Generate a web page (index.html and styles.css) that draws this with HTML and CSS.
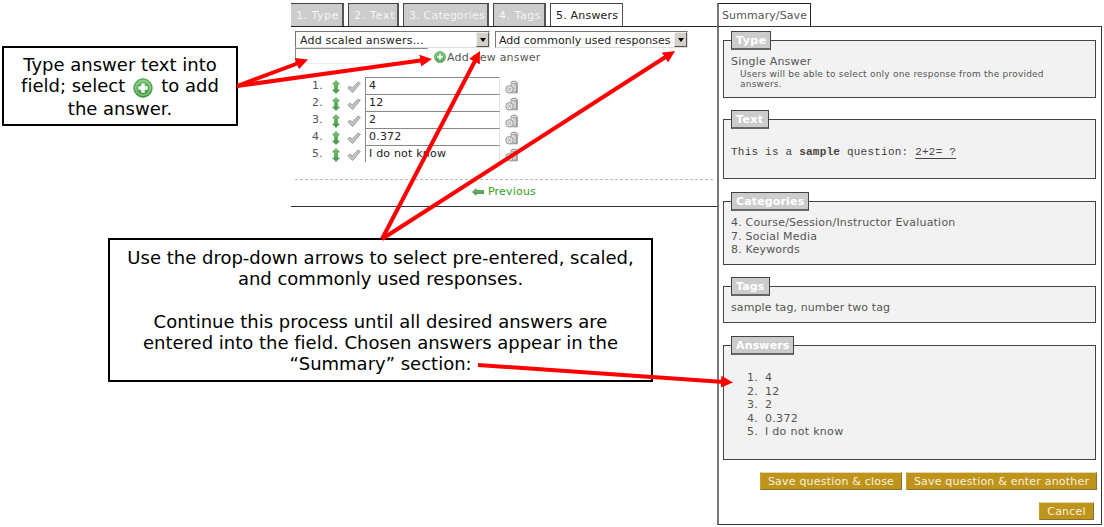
FILE: index.html
```
<!DOCTYPE html>
<html lang="en">
<head>
<meta charset="utf-8">
<title>Question wizard - Answers</title>
<link rel="stylesheet" href="styles.css">
</head>
<body>
<svg class="defs" width="0" height="0">
  <defs>
    <linearGradient id="green" x1="0" y1="0" x2="0" y2="1"><stop offset="0" stop-color="#7cc873"/><stop offset="1" stop-color="#3a9440"/></linearGradient>
    <linearGradient id="grey" x1="0" y1="0" x2="1" y2="0"><stop offset="0" stop-color="#eee"/><stop offset="1" stop-color="#999"/></linearGradient>
    <symbol id="plus" viewBox="0 0 20 20"><circle cx="10" cy="10" r="9.2" fill="url(#green)" stroke="#3f9a41" stroke-width="1"/><circle cx="10" cy="10" r="7.3" fill="none" stroke="#a3d69b" stroke-width="1"/><path d="M8 5h4v3h3v4h-3v3H8v-3H5V8h3z" fill="#fff" stroke="#4da551" stroke-width=".6"/></symbol>
    <symbol id="move" viewBox="0 0 8 14"><path d="M4 .5L7.5 4H5.6v6h1.9L4 13.5.5 10h1.9V4H.5z" fill="url(#green)" stroke="#4f9f52" stroke-width=".7"/></symbol>
    <symbol id="check" viewBox="0 0 14 12"><path d="M.8 6.9l2-2 2.5 2.2L11 1l2.3 1.3-7.3 8.9H5z" fill="#c3c3c3" stroke="#929292" stroke-width=".8"/></symbol>
    <symbol id="trash" viewBox="0 0 14 14"><path d="M6 3.5h6.3v9.3H6z" fill="url(#grey)" stroke="#888" stroke-width=".8"/><path d="M5.5 3.2L7 1.3h4l1.8 1.9" fill="#ddd" stroke="#888" stroke-width=".9"/><path d="M8 5v6M10.2 5v6" stroke="#eee" stroke-width=".8"/><circle cx="4.5" cy="9.3" r="3.8" fill="#ddd" stroke="#909090" stroke-width=".9"/><path d="M3.2 8l2.6 2.6M5.8 8l-2.6 2.6" stroke="#aaa" stroke-width=".9"/></symbol>
    <symbol id="back" viewBox="0 0 12 8"><path d="M.5 4L4 .8v1.8h7.5v2.8H4v1.8z" fill="url(#green)" stroke="#3f8446" stroke-width=".8"/></symbol>
  </defs>
</svg>
<div class="app">
  <main class="wizard">
    <nav class="tabs">
      <a class="tab first">1. Type</a><a class="tab text">2. Text</a><a class="tab categories">3. Categories</a><a class="tab tags">4. Tags</a><a class="tab active">5. Answers</a>
    </nav>
    <section class="editor">
      <div class="selects">
        <div class="select scaled"><span>Add scaled answers...</span><i class="drop"></i></div>
        <div class="select common"><span>Add commonly used responses</span><i class="drop"></i></div>
      </div>
      <div class="add-row"><div class="new-answer"></div><svg class="plus"><use href="#plus"/></svg><span>Add new answer</span></div>
      <div class="answers">
        <div class="answer"><span class="num">1.</span><svg class="move"><use href="#move"/></svg><svg class="check"><use href="#check"/></svg><div class="field">4</div><svg class="trash"><use href="#trash"/></svg></div>
        <div class="answer"><span class="num">2.</span><svg class="move"><use href="#move"/></svg><svg class="check"><use href="#check"/></svg><div class="field">12</div><svg class="trash"><use href="#trash"/></svg></div>
        <div class="answer"><span class="num">3.</span><svg class="move"><use href="#move"/></svg><svg class="check"><use href="#check"/></svg><div class="field">2</div><svg class="trash"><use href="#trash"/></svg></div>
        <div class="answer"><span class="num">4.</span><svg class="move"><use href="#move"/></svg><svg class="check"><use href="#check"/></svg><div class="field">0.372</div><svg class="trash"><use href="#trash"/></svg></div>
        <div class="answer"><span class="num">5.</span><svg class="move"><use href="#move"/></svg><svg class="check"><use href="#check"/></svg><div class="field">I do not know</div><svg class="trash"><use href="#trash"/></svg></div>
      </div>
      <div class="pager"><svg class="back"><use href="#back"/></svg><span>Previous</span></div>
    </section>
  </main>
  <aside class="summary">
    <div class="summary-tab">Summary/Save</div>
    <div class="summary-body">
      <section class="group type"><h3>Type</h3><p>Single Answer</p><p class="hint">Users will be able to select only one response from the provided<br>answers.</p></section>
      <section class="group question"><h3>Text</h3><p>This is a <b>sample</b> question: <u>2+2= ?</u></p></section>
      <section class="group cats"><h3>Categories</h3><p>4. Course/Session/Instructor Evaluation</p><p>7. Social Media</p><p>8. Keywords</p></section>
      <section class="group tagged"><h3>Tags</h3><p>sample tag, number two tag</p></section>
      <section class="group chosen"><h3>Answers</h3>
        <p><span>1.</span>4</p><p><span>2.</span>12</p><p><span>3.</span>2</p><p><span>4.</span>0.372</p><p><span>5.</span>I do not know</p></section>
      <div class="buttons"><div class="button close">Save question &amp; close</div><div class="button another">Save question &amp; enter another</div></div>
      <div class="buttons last"><div class="button cancel">Cancel</div></div>
    </div>
  </aside>
</div>
<div class="callout callout-type">
  <div>Type answer text into</div>
  <div class="with-icon"><span>field; select</span><svg class="plus-big"><use href="#plus"/></svg><span>to add</span></div>
  <div>the answer.</div>
</div>
<div class="callout callout-drop">
  <div>Use the drop-down arrows to select pre-entered, scaled,</div>
  <div>and commonly used responses.</div>
  <div>&nbsp;</div>
  <div>Continue this process until all desired answers are</div>
  <div>entered into the field. Chosen answers appear in the</div>
  <div>“Summary” section:</div>
</div>
<svg class="arrows" width="1104" height="527" viewBox="0 0 1104 527">
  <defs><marker id="tip" viewBox="0 0 12 12" refX="12" refY="6" markerWidth="12" markerHeight="12" markerUnits="userSpaceOnUse" orient="auto"><path d="M0 0L12 6 0 12z" fill="#f00"/></marker></defs>
  <g stroke="#f00" stroke-width="4" fill="none">
    <path d="M237 86L300 62.5"/><path d="M237 86L424 60"/><path d="M382 239L476 59"/><path d="M382 239L667 56"/><path d="M478 365L724 382"/>
  </g>
  <g stroke="none" fill="none">
    <path d="M237 86L308 59.5" marker-end="url(#tip)"/><path d="M237 86L432 59" marker-end="url(#tip)"/><path d="M382 239L480 51" marker-end="url(#tip)"/><path d="M382 239L675 51" marker-end="url(#tip)"/><path d="M478 365L733 382.5" marker-end="url(#tip)"/>
  </g>
</svg>
</body>
</html>
```
FILE: styles.css
```
* { box-sizing: border-box; }
body { margin: 0; width: 1104px; height: 527px; overflow: hidden; background: #fff; color: #555; font: 11px/13.5px "DejaVu Sans", sans-serif; letter-spacing: 0.2px; white-space: nowrap; font-variant-ligatures: none; }
.defs { position: absolute; }
svg { display: block; flex: none; }
p, h3 { margin: 0; }

.app { display: flex; padding: 3px 0 0 291px; }
.wizard { width: 426px; height: 204px; border-bottom: 1px solid #333; }
.tabs { display: flex; gap: 4px; height: 24px; border-bottom: 1px solid #222; }
.tab { height: 23px; padding: 5px 0 0 5px; background: #ccc; border: 1px solid #444; border-right: 2px solid #555; border-bottom: 0; color: #f4f4f4; line-height: 14px; }
.tab.first { width: 53px; border-left: 0; letter-spacing: 0.5px; }
.tab.text { width: 51px; letter-spacing: 0.7px; }
.tab.categories { width: 86px; }
.tab.tags { width: 53px; letter-spacing: 0.5px; }
.tab.active { width: 73px; background: #fff; border-right-width: 1px; color: #222; }

.editor { padding: 4px 4px 0 4px; }
.selects { display: flex; gap: 5px; }
.select { display: flex; justify-content: space-between; height: 17px; border: 1px solid #777; border-right-color: #ddd; border-bottom-color: #ddd; padding-left: 4px; color: #222; line-height: 17px; }
.scaled { width: 195px; }
.common { width: 193px; padding-left: 3px; letter-spacing: 0; }
.drop { width: 13px; height: 15px; background: #d4d0c8; border: 1px solid #eee; border-right-color: #555; border-bottom-color: #555; display: flex; align-items: center; justify-content: center; }
.drop::after { content: ""; border: 3px solid transparent; border-top: 4px solid #000; border-bottom: 0; }
.add-row { display: flex; align-items: flex-start; height: 29px; }
.new-answer { width: 133px; height: 16px; border: 1px solid #888; border-right-color: #eee; border-bottom-color: #eee; }
.plus { width: 12px; height: 12px; margin: 3px 1px 0 6px; }
.add-row span { line-height: 19px; }
.answer { display: flex; align-items: center; height: 17px; }
.num { width: 37px; padding-left: 17px; }
.move { width: 8px; height: 14px; margin-top: 3px; }
.check { width: 14px; height: 12px; margin: 3px 0 0 7px; }
.field { width: 135px; height: 17px; margin-left: 4px; padding-left: 3px; border: 1px solid #888; border-right-color: #e4e4e4; border-bottom: 0; color: #222; line-height: 15px; }
.trash { width: 14px; height: 14px; margin: 2px 0 0 5px; }
.pager { display: flex; justify-content: center; gap: 4px; margin-top: 17px; padding: 4px 0 0; border-top: 1px dashed #bbb; color: #33a01c; line-height: 15px; }
.back { width: 12px; height: 8px; margin-top: 4px; }

.summary { width: 385px; }
.summary-tab { width: 94px; height: 23px; border: 1px solid #222; border-left: 2px solid #777; border-bottom: 0; padding: 5px 0 0 3px; line-height: 14px; letter-spacing: 0.1px; }
.summary-body { height: 499px; border: 1px solid #333; border-left: 2px solid #777; padding: 13px 6px 0 4px; }
.group { width: 373px; margin-bottom: 21px; padding-left: 7px; border: 1px solid #444; background: #f2f2f2; }
.group h3 { width: max-content; height: 19px; margin-top: -10px; padding: 0 4px; border: 1px solid #444; border-bottom: 2px solid #666; background: #ccc; color: #fff; font-size: 11px; line-height: 18px; letter-spacing: 0.15px; }
.type { height: 58px; }
.group.type h3 { width: 40px; letter-spacing: 0.5px; }
.type p { margin-top: 5px; }
.type .hint { margin: 0 0 0 9px; font-size: 9px; line-height: 10.5px; letter-spacing: 0.22px; }
.question { height: 60px; margin-bottom: 22px; }
.group.question h3 { width: 38px; letter-spacing: 0.4px; }
.question p { margin-top: 17px; color: #444; font-family: "Liberation Mono", monospace; letter-spacing: 0.22px; }
.question u { text-underline-offset: 3px; }
.cats { height: 64px; }
.cats h3 { width: 78px; }
.cats h3 + p { margin-top: 5px; }
.tagged { height: 37px; margin-bottom: 22px; }
.tagged h3 { width: 39px; }
.tagged p { margin-top: 5px; letter-spacing: 0.1px; }
.chosen { height: 115px; margin-bottom: 12px; }
.chosen h3 { width: 63px; }
.chosen h3 + p { margin-top: 16px; }
.chosen p { padding-left: 16px; letter-spacing: 0.3px; }
.chosen span { display: inline-block; width: 18px; }
.buttons { display: flex; justify-content: flex-end; gap: 4px; height: 30px; margin-right: -2px; }
.button { height: 18px; border: 1px solid #c99e2d; border-top-color: #e8d9ad; border-right-color: #897239; border-bottom-color: #897239; background: #bf941b; color: #f7f1df; line-height: 17px; text-align: center; }
.close { width: 142px; }
.another { width: 191px; }
.cancel { width: 55px; }
.last { margin-right: 1px; }

.callout { position: absolute; border: 2px solid #000; background: #fff; color: #000; font-size: 18px; line-height: 21.2px; letter-spacing: 0; text-align: center; }
.callout-type { left: 2px; top: 46px; width: 236px; height: 80px; padding-top: 6px; }
.callout-drop { left: 108px; top: 238px; width: 545px; height: 144px; padding-top: 7px; }
.with-icon { display: flex; justify-content: center; gap: 8px; }
.plus-big { width: 20px; height: 20px; margin-top: 3px; }
.arrows { position: absolute; left: 0; top: 0; }
```
